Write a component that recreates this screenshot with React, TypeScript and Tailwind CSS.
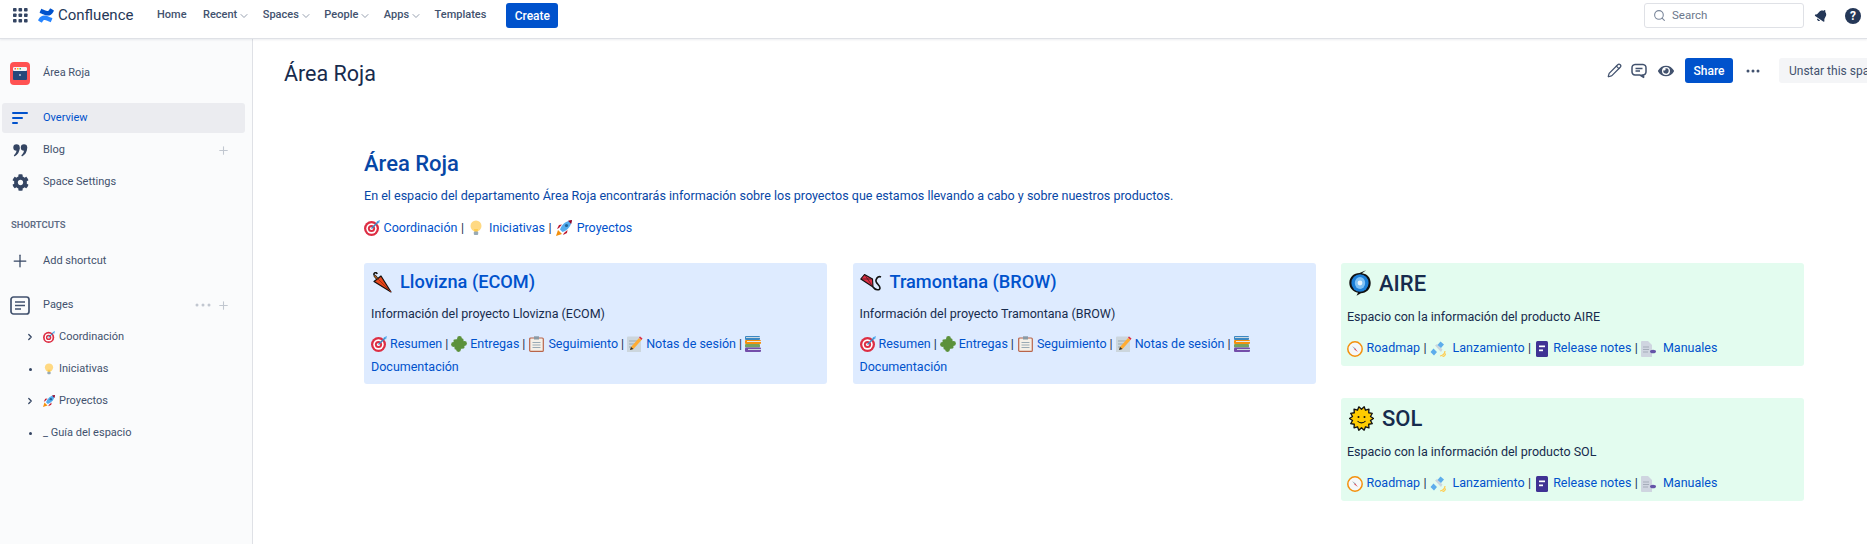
import React from "react";
import { FaBell, FaCog, FaEye } from "react-icons/fa";
import { Pencil, Search, ChevronDown, ChevronRight, Plus } from "lucide-react";

type IP = { s?: number };
const Target = ({ s = 16 }: IP) => (
  <svg width={s} height={s} viewBox="0 0 16 16" className="inline-block shrink-0">
    <circle cx="7.5" cy="8.5" r="7.5" fill="#DD2E44" /><circle cx="7.5" cy="8.5" r="5.2" fill="#fff" />
    <circle cx="7.5" cy="8.5" r="3.6" fill="#DD2E44" /><circle cx="7.5" cy="8.5" r="1.6" fill="#fff" />
    <path d="M7.5 8.5 14 2" stroke="#3B88C3" strokeWidth="1.4" /><path d="M12.5 1.5 16 0l-1 3.5z" fill="#55ACEE" />
  </svg>
);
const Bulb = ({ s = 16 }: IP) => (
  <svg width={s} height={s} viewBox="0 0 16 16" className="inline-block shrink-0">
    <circle cx="8" cy="6" r="5.5" fill="#FFD983" /><path d="M6 9h4l-.5 3h-3z" fill="#FFCC4D" /><rect x="5.8" y="11.5" width="4.4" height="3.5" rx="1" fill="#99AAB5" />
  </svg>
);
const Rocket = ({ s = 16 }: IP) => (
  <svg width={s} height={s} viewBox="0 0 16 16" className="inline-block shrink-0">
    <path d="M2 10 0 16l6-2z" fill="#F4900C" /><path d="M3 8 1 9l2-4 3-.5zM8 13l-1 2 4-2 .5-3z" fill="#BE1931" />
    <path d="M4 9.5C6 4 10 1 16 0c-1 6-4 10-9.5 12z" fill="#55ACEE" /><circle cx="10.5" cy="5.5" r="1.6" fill="#269" />
    <path d="M12 .8 16 0l-.8 4z" fill="#A0041E" />
  </svg>
);
const Umbrella = () => (
  <svg width="21" height="21" viewBox="0 0 21 21" className="inline-block shrink-0">
    <path d="M6 6.5 3.5 3.5" stroke="#111" strokeWidth="2.6" />
    <path d="M6 6.5 3.5 3.5" stroke="#B5651D" strokeWidth="1.2" />
    <path d="M3.5 3.5a1.6 1.6 0 1 1 2.6-1.5" stroke="#111" strokeWidth="1.6" fill="none" />
    <path d="M3 9.5 10 4 20 20z" fill="#E8481C" stroke="#111" strokeWidth="1.2" strokeLinejoin="round" />
    <path d="M6.5 6.5 20 20" stroke="#A5280A" strokeWidth=".9" />
  </svg>
);
const Kite = () => (
  <svg width="22" height="19" viewBox="0 0 22 19" className="inline-block shrink-0">
    <path d="M.8 6 4.500 1.500 12.500 6 13 14z" fill="#DD2E44" stroke="#111" strokeWidth="1.1" strokeLinejoin="round" />
    <path d="M.8 6 12.500 6M4.500 1.500 13 14" stroke="#111" strokeWidth=".5" />
    <path d="M13 14c2 3 7 4 7 1s-5-5-4-8 3-4 5-3" fill="none" stroke="#111" strokeWidth="1.6" />
  </svg>
);
const Puzzle = () => (
  <svg width="16" height="16" viewBox="0 0 16 16" fill="#5C913B" className="inline-block shrink-0">
    <rect x="3" y="3" width="10" height="10" rx="1" transform="rotate(-8 8 8)" />
    <circle cx="8.5" cy="2.5" r="2.4" /><circle cx="13.5" cy="7.5" r="2.4" /><circle cx="7.5" cy="13.5" r="2.4" /><circle cx="2.5" cy="8.5" r="2.4" />
  </svg>
);
const Clip = () => (
  <svg width="15" height="16" viewBox="0 0 15 16" className="inline-block shrink-0">
    <rect x=".7" y="2" width="13.6" height="13.4" rx="1" fill="#F5F0E8" stroke="#B8644A" strokeWidth="1.2" />
    <rect x="5" y=".3" width="5" height="3.2" fill="#8A9AA5" />
    <path d="M3.5 6.5h8M3.5 9h8M3.5 11.5h8" stroke="#99AAB5" strokeWidth="1" />
  </svg>
);
const Memo = () => (
  <svg width="16" height="16" viewBox="0 0 16 16" className="inline-block shrink-0">
    <rect width="14" height="16" y="0.5" rx="1" fill="#CCD6DD" /><path d="M2 5h9M2 8h7M2 11h5" stroke="#99AAB5" />
    <path d="m3 14 1-3 8-9 2.5 2-8 9z" fill="#FFAC33" /><path d="m12 1.5 1-1 2.5 2-1 1.5z" fill="#DD2E44" /><path d="m3 14 1-3 2.5 2z" fill="#292F33" />
  </svg>
);
const Books = () => (
  <svg width="16" height="16" viewBox="0 0 16 16" className="inline-block shrink-0">
    <rect y="0" width="15" height="4" rx="1" fill="#3B88C3" /><rect x="1" y="1" width="14" height="1" fill="#CCD6DD" />
    <rect y="4" width="16" height="4" rx="1" fill="#F4900C" /><rect x="2" y="5" width="14" height="1" fill="#E1E8ED" />
    <rect y="8" width="15" height="3.6" rx="1" fill="#5C913B" opacity=".8" /><rect y="11.5" width="16" height="4.5" rx="1" fill="#744EAA" /><rect x="3" y="13" width="13" height="1" fill="#CCD6DD" />
  </svg>
);
const Cyclone = () => (
  <svg width="22" height="26" viewBox="0 0 22 26" className="inline-block shrink-0">
    <path d="M17 .3 13 3.300C18.500 4 21.700 8 21.700 13c0 6-4.500 10.300-9.700 10.300L7.500 25.700l1.500-3C4 21.500.3 18 .3 13 .3 7 5 3 10.500 3z" fill="#111" />
    <ellipse cx="11" cy="13" rx="8.6" ry="8.800" fill="#1C7FD8" /><ellipse cx="11" cy="13" rx="5.2" ry="6" fill="#7FC1F5" /><circle cx="11" cy="13" r="2.4" fill="#E8F4FD" />
  </svg>
);
const Sun = () => {
  const pts: string[] = [];
  for (let i = 0; i < 28; i++) {
    const r = i % 2 ? 9.2 : 12;
    const a = (i / 28) * Math.PI * 2;
    pts.push(`${12.5 + r * Math.cos(a)},${12.5 + r * Math.sin(a)}`);
  }
  return (
    <svg width="25" height="25" viewBox="0 0 25 25" className="inline-block shrink-0">
      <polygon points={pts.join(" ")} fill="#FFCC00" stroke="#111" strokeWidth="1.3" strokeLinejoin="round" />
      <circle cx="9.5" cy="11" r="1" fill="#111" /><circle cx="15.5" cy="11" r="1" fill="#111" />
      <path d="M8.5 15c2 2.5 6 2.5 8 0" fill="none" stroke="#111" strokeWidth="1.1" />
    </svg>
  );
};
const Compass = () => (
  <svg width="16" height="16" viewBox="0 0 16 16" className="inline-block shrink-0">
    <circle cx="8" cy="8" r="7.2" fill="#F5F7F9" stroke="#F4900C" strokeWidth="1.5" />
    <path d="m5 5 3.6 2.4L8 8.6z" fill="#8899A6" /><path d="m11 11-3.6-2.4L8 7.4z" fill="#DD2E44" />
  </svg>
);
const Satellite = () => (
  <svg width="16" height="16" viewBox="0 0 16 16" className="inline-block shrink-0">
    <path d="m5 4.500 2-1.500 5.500 5.500L11 11z" fill="#CCD6DD" />
    <path d="m10.500 .5 3.500 3-3 3.500-3.500-3zM3.500 7.500 7 11l-3 3.500L.5 11z" fill="#5DADEC" />
    <path d="M10 15c2.500 0 5-2.500 5-5M12.500 15.500c1.500 0 3-1.500 3-3" stroke="#FFCC4D" strokeWidth="1.2" fill="none" />
  </svg>
);
const Notes = () => (
  <svg width="12" height="16" viewBox="0 0 12 16" className="inline-block shrink-0">
    <rect width="12" height="16" rx="1.5" fill="#403294" /><rect x="3" y="4.5" width="6" height="1.7" fill="#fff" /><rect x="3" y="8.5" width="4" height="1.7" fill="#fff" />
  </svg>
);
const FileI = () => (
  <svg width="15" height="16" viewBox="0 0 15 16" className="inline-block shrink-0">
    <path d="M0 1a1 1 0 0 1 1-1h6l4 4v12H1a1 1 0 0 1-1-1z" fill="#CFD5E0" /><path d="M2 6h6M2 8.500h6M2 11h5" stroke="#A5ADBA" />
    <ellipse cx="12" cy="10.5" rx="3" ry="1.8" fill="#6554A8" />
  </svg>
);

const A = ({ children }: { children: React.ReactNode }) => <span className="text-[#0052CC]">{children}</span>;

function ProjectLinks() {
  return (
    <div className="text-[12.5px] leading-[23px] mt-[8px]">
      <div className="flex items-center gap-[3px] h-[23px] whitespace-nowrap">
        <Target /><A>Resumen</A><span>|</span><Puzzle /><A>Entregas</A><span>|</span>
        <span className="ml-[1px] mr-[1px] flex"><Clip /></span><A>Seguimiento</A><span>|</span><Memo /><A>Notas de sesión</A><span>|</span><Books />
      </div>
      <A>Documentación</A>
    </div>
  );
}
function ProductLinks() {
  return (
    <div className="flex items-center gap-[3.5px] h-[23px] text-[12.5px] mt-[10px] whitespace-nowrap">
      <Compass /><A>Roadmap</A><span>|</span><Satellite /><span className="ml-[3px]"><A>Lanzamiento</A></span><span>|</span>
      <span className="mx-[1px] flex"><Notes /></span><span className="ml-[1px]"><A>Release notes</A></span><span>|</span><FileI /><span className="ml-[3px]"><A>Manuales</A></span>
    </div>
  );
}
function ProjectCard({ icon, title, text }: { icon: React.ReactNode; title: string; text: string }) {
  return (
    <div className="bg-[#DEEBFF] rounded-[3px] h-[121px] px-[7px] pt-[6px]">
      <div className="flex items-center gap-[8px] h-[26px] text-[18.2px] font-medium text-[#0052CC] whitespace-nowrap">{icon}<span>{title}</span></div>
      <p className="text-[12.5px] leading-[20px] mt-[9px]">{text}</p>
      <ProjectLinks />
    </div>
  );
}
function ProductCard({ icon, title, text }: { icon: React.ReactNode; title: string; text: string }) {
  return (
    <div className="bg-[#E3FCEF] rounded-[3px] h-[103px] px-[6px] pt-[7px]">
      <div className="flex items-center gap-[8px] h-[26px] text-[22px] font-medium pl-[2px] whitespace-nowrap">{icon}<span>{title}</span></div>
      <p className="text-[12.5px] leading-[20px] mt-[11px]">{text}</p>
      <ProductLinks />
    </div>
  );
}
function NavItem({ label, chevron = true }: { label: string; chevron?: boolean }) {
  return (
    <div className={`flex items-center gap-[1px] text-[11px] font-medium text-[#42526E] ${chevron ? "" : "mr-[4px]"}`}>
      <span>{label}</span>
      {chevron && <ChevronDown size={12} className="text-[#97A0AF]" />}
    </div>
  );
}
function SideRow({ icon, label, active, right }: { icon: React.ReactNode; label: string; active?: boolean; right?: React.ReactNode }) {
  return (
    <div className={`flex items-center ml-[2px] w-[243px] rounded-[3px] ${active ? "bg-[#EBECF0] text-[#0052CC] h-[30px] my-[1px]" : "h-[32px] text-[#42526E]"}`}>
      <div className="w-[41px] pr-[5px] flex justify-center shrink-0">{icon}</div>
      <span className="flex-1">{label}</span>
      {right}
    </div>
  );
}
function TreeRow({ marker, icon, label }: { marker: "c" | "d"; icon?: React.ReactNode; label: string }) {
  return (
    <div className="flex items-center h-[32px] pl-[25px] text-[#42526E]">
      <div className="w-[10px] flex justify-center shrink-0">
        {marker === "c" ? <ChevronRight size={10} strokeWidth={3} className="text-[#344563]" /> : <span className="w-[3px] h-[3px] rounded-full bg-[#344563]" />}
      </div>
      <div className="ml-[8px] flex items-center gap-[4px]">{icon}<span>{label}</span></div>
    </div>
  );
}

export default function App() {
  return (
    <div className="w-[1867px] h-[544px] overflow-hidden bg-white font-['Roboto',sans-serif] text-[#172B4D] flex flex-col">
      <header className="h-[39px] shrink-0 border-b border-[#DFE1E6] shadow-[0_1px_2px_rgba(9,30,66,0.08)] flex items-center pl-[13px] pr-[6px] pb-[7px] z-10 bg-white">
        <svg width="15" height="15" viewBox="0 0 15 15" className="shrink-0 text-[#344563]" fill="currentColor">
          {[0, 5.5, 11].flatMap((x) => [0, 5.5, 11].map((y) => <rect key={`${x}-${y}`} x={x} y={y} width="3.6" height="3.6" rx=".8" />))}
        </svg>
        <svg width="16" height="15" viewBox="0 0 16 15" className="ml-[10px] shrink-0">
          <path d="M.6 11.3c-.2.3-.3.6-.4.8-.1.2 0 .5.2.6l3 1.8c.2.1.5.1.6-.1.2-.3.4-.6.6-1 1.2-2 2.4-1.7 4.6-.7l3 1.4c.2.1.5 0 .6-.2l1.5-3.2c.1-.2 0-.5-.2-.6-.7-.3-1.9-.9-3.1-1.4C6.6 6.6 3 6.8.6 11.3Z" fill="#2684FF" />
          <path d="M15.4 3.7c.2-.3.3-.6.4-.8.1-.2 0-.5-.2-.6L12.6.5c-.2-.1-.5-.1-.6.1-.2.3-.4.6-.6 1-1.2 2-2.4 1.7-4.6.7L3.8.9c-.2-.1-.5 0-.6.2L1.7 4.3c-.1.2 0 .5.2.6.7.3 1.9.9 3.1 1.4 4.4 2.1 8 1.9 10.4-2.6Z" fill="#0052CC" />
        </svg>
        <span className="ml-[4px] w-[75px] text-[15px] text-[#253858] whitespace-nowrap">Confluence</span>
        <nav className="ml-[24px] flex items-center gap-[12.5px]">
          <NavItem label="Home" chevron={false} />
          <NavItem label="Recent" />
          <NavItem label="Spaces" />
          <NavItem label="People" />
          <NavItem label="Apps" />
          <NavItem label="Templates" chevron={false} />
        </nav>
        <button className="ml-[16px] w-[52px] h-[25px] bg-[#0052CC] rounded-[3px] text-white text-[12px] font-medium">Create</button>
        <div className="ml-auto flex items-center">
          <div className="w-[160px] h-[25px] border border-[#DFE1E6] rounded-[3px] flex items-center pl-[8px] gap-[6px] text-[11.5px] text-[#6B778C]">
            <Search size={13} className="text-[#7A869A]" /><span>Search</span>
          </div>
          <FaBell size={13} className="ml-[11px] text-[#253858] rotate-[35deg]" />
          <div className="ml-[17px] w-[16px] h-[16px] rounded-full bg-[#253858] text-white text-[12px] font-bold flex items-center justify-center">?</div>
        </div>
      </header>
      <div className="flex flex-1 min-h-0">
        <aside className="w-[253px] shrink-0 bg-[#FAFBFC] border-r border-[#DFE1E6] text-[11px]">
          <div className="flex items-center h-[24px] mt-[22px] pl-[10px] text-[#42526E]">
            <svg width="20" height="23" viewBox="0 0 20 23" className="shrink-0">
              <rect width="20" height="23" rx="4" fill="#FF5252" /><rect x="3" y="5" width="14" height="13" rx="1" fill="#26487A" />
              <rect x="3" y="5" width="14" height="4" rx="1" fill="#F4F5F7" />
              <rect x="4.5" y="6" width="1.5" height="1.5" fill="#FF5252" /><rect x="7" y="6" width="1.5" height="1.5" fill="#FFC400" /><rect x="9.5" y="6" width="1.5" height="1.5" fill="#36B37E" />
              <rect x="9.5" y="12" width="1" height="2" fill="#fff" />
            </svg>
            <span className="ml-[13px]">Área Roja</span>
          </div>
          <div className="mt-[18px]">
            <SideRow active label="Overview" icon={
              <svg width="16" height="12" viewBox="0 0 16 12" fill="#0052CC"><rect width="16" height="2" rx="1" /><rect y="5" width="11" height="2" rx="1" /><rect y="10" width="6" height="2" rx="1" /></svg>
            } />
            <SideRow label="Blog" icon={
              <svg width="15" height="13" viewBox="0 0 15 13" fill="#344563"><circle cx="3.5" cy="3.5" r="3.2" /><path d="M6.7 3.5C6.7 8 4.500 11 1.500 12.500L.8 11.200C2.500 9.800 3.300 8.500 3.500 6.500z" /><circle cx="11" cy="3.5" r="3.2" /><path d="M14.200 3.500C14.200 8 12 11 9 12.500l-.7-1.300C10 9.800 10.800 8.500 11 6.500z" /></svg>
            } right={<Plus size={13} className="text-[#C1C7D0] mr-[15px]" />} />
            <SideRow label="Space Settings" icon={<FaCog size={17} className="text-[#344563]" />} />
          </div>
          <div className="mt-[20px] pl-[11px] text-[9.5px] font-semibold leading-[14px] text-[#5E6C84]">SHORTCUTS</div>
          <div className="mt-[13px]">
            <SideRow label="Add shortcut" icon={<Plus size={20} strokeWidth={1.5} className="text-[#344563]" />} />
          </div>
          <div className="mt-[12px]">
            <SideRow label="Pages" icon={
              <svg width="20" height="19" viewBox="0 0 20 19" fill="none" stroke="#42526E"><rect x="1" y="1" width="18" height="17" rx="2.5" strokeWidth="1.7" /><path d="M5 6h10M5 9.5h10M5 13h6" strokeWidth="1.5" /></svg>
            } right={
              <div className="flex items-center gap-[6px] mr-[15px] text-[#C1C7D0]">
                <svg width="16" height="4" viewBox="0 0 16 4" fill="currentColor"><circle cx="2" cy="2" r="1.5" /><circle cx="8" cy="2" r="1.5" /><circle cx="14" cy="2" r="1.5" /></svg>
                <Plus size={13} />
              </div>
            } />
            <TreeRow marker="c" icon={<Target s={12} />} label="Coordinación" />
            <TreeRow marker="d" icon={<Bulb s={12} />} label="Iniciativas" />
            <TreeRow marker="c" icon={<Rocket s={12} />} label="Proyectos" />
            <TreeRow marker="d" label="_ Guía del espacio" />
          </div>
        </aside>
        <main className="flex-1 min-w-0">
          <div className="flex items-center h-[25px] mt-[19px] pl-[31px]">
            <h2 className="mt-[6px] text-[21.5px] text-[#172B4D] leading-[30px]">Área Roja</h2>
            <div className="ml-auto flex items-center shrink-0 -mr-[37px]">
              <Pencil size={15} className="shrink-0 text-[#42526E]" />
              <svg width="16" height="16" viewBox="0 0 16 16" fill="none" stroke="#42526E" strokeWidth="1.5" className="ml-[9px] shrink-0">
                <path d="M4 1.5h8A3.2 3.2 0 0 1 15 5v3.500A3.2 3.2 0 0 1 12 12h-.5l1.500 2.500L9 12H4A3.2 3.2 0 0 1 1 8.500V5a3.2 3.2 0 0 1 3-3.500Z" /><path d="M4.500 5.500h7M4.500 8h4.500" />
              </svg>
              <FaEye size={16} className="shrink-0 text-[#42526E] ml-[11px]" />
              <button className="ml-[11px] shrink-0 w-[48px] h-[25px] bg-[#0052CC] rounded-[3px] text-white text-[12px] font-medium">Share</button>
              <svg width="14" height="4" viewBox="0 0 14 4" fill="#42526E" className="ml-[13px] shrink-0"><circle cx="2" cy="2" r="1.5" /><circle cx="7" cy="2" r="1.5" /><circle cx="12" cy="2" r="1.5" /></svg>
              <div className="ml-[19px] h-[25px] pl-[10px] w-[125px] shrink-0 bg-[#F4F5F7] rounded-[3px] flex items-center text-[12px] text-[#42526E] whitespace-nowrap">Unstar this space</div>
            </div>
          </div>
          <div className="pl-[111px] mt-[66px] w-[1551px]">
            <h1 className="text-[22px] font-medium leading-[30px] text-[#0747A6]">Área Roja</h1>
            <p className="mt-[7px] text-[12.55px] leading-[20px] text-[#0747A6] whitespace-nowrap">En el espacio del departamento Área Roja encontrarás información sobre los proyectos que estamos llevando a cabo y sobre nuestros productos.</p>
            <div className="mt-[12px] flex items-center gap-[3.5px] h-[20px] text-[12.5px] whitespace-nowrap">
              <Target /><A>Coordinación</A><span>|</span><span className="mx-[1px] flex"><Bulb /></span><A>Iniciativas</A><span>|</span><span className="mx-[1px] flex"><Rocket /></span><A>Proyectos</A>
            </div>
            <div className="mt-[25px] grid grid-cols-3 gap-x-[25.5px] w-[1440px] items-start">
              <ProjectCard icon={<Umbrella />} title="Llovizna (ECOM)" text="Información del proyecto Llovizna (ECOM)" />
              <ProjectCard icon={<Kite />} title="Tramontana (BROW)" text="Información del proyecto Tramontana (BROW)" />
              <div className="flex flex-col gap-[32px]">
                <ProductCard icon={<Cyclone />} title="AIRE" text="Espacio con la información del producto AIRE" />
                <ProductCard icon={<Sun />} title="SOL" text="Espacio con la información del producto SOL" />
              </div>
            </div>
          </div>
        </main>
      </div>
    </div>
  );
}
